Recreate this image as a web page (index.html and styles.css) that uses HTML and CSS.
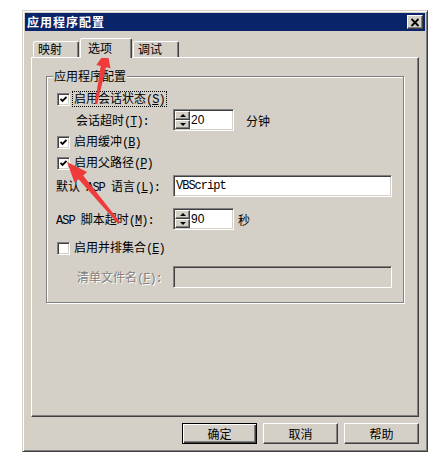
FILE: index.html
```html
<!DOCTYPE html>
<html>
<head>
    <meta charset="utf-8">
    <title>应用程序配置</title>
    <link rel="stylesheet" href="styles.css">
</head>
<body>
    <div class="window">
        <div class="titlebar">
            <span class="title">应用程序配置</span>
            <span class="close">
                <svg width="10" height="9" viewBox="0 0 10 9"><path d="M1.5 1 L8.5 8 M8.5 1 L1.5 8" stroke="#000" stroke-width="1.8" fill="none"/></svg>
            </span>
        </div>

        <div class="tabs">
            <div class="tab">映射</div>
            <div class="tab active">选项</div>
            <div class="tab">调试</div>
        </div>

        <div class="panel">
            <div class="group">
                <div class="legend">应用程序配置</div>

                <div class="row row-check r1">
                    <span class="check"><svg width="7" height="7" viewBox="0 0 7 7"><path d="M0.5 3 L2.5 5 L6.5 1" stroke="#000" stroke-width="1.8" fill="none"/></svg></span>
                    <span class="check-label focus">启用会话状态<span class="latin">(<u>S</u>)</span></span>
                </div>

                <div class="row row-field r2">
                    <span class="field-label indent">会话超时<span class="latin">(<u>T</u>):</span></span>
                    <div class="spin">
                        <div class="spin-buttons">
                            <span class="spin-btn"><i class="arrow-up"></i></span>
                            <span class="spin-btn"><i class="arrow-down"></i></span>
                        </div>
                        <span class="spin-value">20</span>
                    </div>
                    <span class="unit unit-wide">分钟</span>
                </div>

                <div class="row row-check r3">
                    <span class="check"><svg width="7" height="7" viewBox="0 0 7 7"><path d="M0.5 3 L2.5 5 L6.5 1" stroke="#000" stroke-width="1.8" fill="none"/></svg></span>
                    <span class="check-label">启用缓冲<span class="latin">(<u>B</u>)</span></span>
                </div>

                <div class="row row-check r4">
                    <span class="check"><svg width="7" height="7" viewBox="0 0 7 7"><path d="M0.5 3 L2.5 5 L6.5 1" stroke="#000" stroke-width="1.8" fill="none"/></svg></span>
                    <span class="check-label">启用父路径<span class="latin">(<u>P</u>)</span></span>
                </div>

                <div class="row row-field r5">
                    <span class="field-label flush">默认<span class="latin"> ASP </span>语言<span class="latin">(<u>L</u>):</span></span>
                    <div class="field">VBScript</div>
                </div>

                <div class="row row-field r6">
                    <span class="field-label flush"><span class="latin">ASP </span>脚本超时<span class="latin">(<u>M</u>):</span></span>
                    <div class="spin">
                        <div class="spin-buttons">
                            <span class="spin-btn"><i class="arrow-up"></i></span>
                            <span class="spin-btn"><i class="arrow-down"></i></span>
                        </div>
                        <span class="spin-value">90</span>
                    </div>
                    <span class="unit">秒</span>
                </div>

                <div class="row row-check r7">
                    <span class="check"></span>
                    <span class="check-label">启用并排集合<span class="latin">(<u>E</u>)</span></span>
                </div>

                <div class="row row-field r8">
                    <span class="field-label indent-more disabled">清单文件名<span class="latin">(<u>F</u>):</span></span>
                    <div class="field field-disabled"></div>
                </div>
            </div>
        </div>

        <div class="buttons">
            <div class="btn btn-default">确定</div>
            <div class="btn">取消</div>
            <div class="btn">帮助</div>
        </div>
    </div>

    <!-- annotation arrows drawn over the dialog -->
    <svg class="arrows" width="443" height="465" viewBox="0 0 443 465">
        <polygon points="107,50 110.5,68.3 106,67.2 97.2,104.2 94.8,103.8 100.7,66 96.3,65" fill="#ef3b39"/>
        <polygon points="67,162 87.2,172 83.2,175.6 120.2,222.2 118,223.8 78.6,179.3 74.5,182.6" fill="#ef3b39"/>
    </svg>
</body>
</html>
```

FILE: styles.css
```css
body {
    margin: 0;
    background-color: #ffffff;
    font-family: "Noto Sans CJK SC", "Liberation Sans", sans-serif;
    font-size: 12px;
    color: #000000;
}

.window {
    box-sizing: border-box;
    width: 406px;
    height: 442px;
    margin: 10px 0 0 22px;
    padding: 2px;
    background-color: #d4d0c8;
    border: 1px solid;
    border-color: #d4d0c8 #404040 #404040 #d4d0c8;
    box-shadow: inset 1px 1px 0 #ffffff, inset -1px -1px 0 #808080;
}

.titlebar {
    display: flex;
    align-items: center;
    justify-content: space-between;
    height: 18px;
    padding: 0 2px;
    background-color: #0a246a;
}

.title {
    color: #ffffff;
    font-weight: bold;
    letter-spacing: 1px;
    line-height: 18px;
}

.close {
    box-sizing: border-box;
    display: flex;
    align-items: center;
    justify-content: center;
    width: 16px;
    height: 14px;
    background-color: #d4d0c8;
    border: 1px solid;
    border-color: #ffffff #404040 #404040 #ffffff;
    box-shadow: inset -1px -1px 0 #808080;
}

/* tabs */
.tabs {
    display: flex;
    align-items: flex-end;
    height: 19px;
    margin: 7px 0 0 8px;
}

.tab {
    box-sizing: border-box;
    width: 46px;
    height: 16px;
    padding-left: 4px;
    line-height: 14px;
    background-color: #d4d0c8;
    border: 1px solid;
    border-bottom: none;
    border-color: #ffffff #404040 transparent #ffffff;
    border-radius: 2px 2px 0 0;
    box-shadow: inset -1px 0 0 #808080;
}

.tab.active {
    position: relative;
    z-index: 1;
    width: 52px;
    height: 20px;
    margin: 0 1px -1px 1px;
    padding-left: 7px;
    line-height: 17px;
}

.panel {
    box-sizing: border-box;
    width: 388px;
    height: 360px;
    margin-left: 6px;
    padding: 18px 0 0 14px;
    border: 1px solid;
    border-color: #ffffff #404040 #404040 #ffffff;
    box-shadow: inset -1px -1px 0 #808080;
}

/* group box */
.group {
    box-sizing: border-box;
    width: 358px;
    height: 227px;
    padding: 0 10px;
    border: 1px solid #808080;
    box-shadow: inset 1px 1px 0 #ffffff, 1px 1px 0 #ffffff;
}

.legend {
    width: max-content;
    margin: -8px 0 0 -4px;
    padding: 0 1px;
    line-height: 14px;
    background-color: #d4d0c8;
}

.row {
    display: flex;
    align-items: center;
}

.row-check {
    height: 16px;
}

.row-field {
    height: 22px;
}

.r1 { margin-top: 8px; }
.r2 { margin-top: 2px; }
.r3 { margin-top: 3px; }
.r4 { margin-top: 5px; }
.r5 { margin-top: 4px; }
.r6 { margin-top: 11px; }
.r7 { margin-top: 10px; }
.r8 { margin-top: 10px; }

/* half-width latin, like the dialog font */
.latin {
    font-family: "Liberation Mono", monospace;
    font-size: 12px;
    letter-spacing: -1px;
    white-space: pre;
}

.check {
    box-sizing: border-box;
    display: flex;
    align-items: center;
    justify-content: center;
    flex: none;
    width: 13px;
    height: 13px;
    background-color: #ffffff;
    border: 1px solid;
    border-color: #808080 #ffffff #ffffff #808080;
    box-shadow: inset 1px 1px 0 #404040, inset -1px -1px 0 #d4d0c8;
}

.check-label {
    margin-left: 4px;
    line-height: 14px;
}

.check-label.focus {
    margin-left: 2px;
    padding: 0 1px;
    line-height: 12px;
    border: 1px dotted #000000;
}

.field-label {
    box-sizing: border-box;
    flex: none;
    width: 116px;
    white-space: nowrap;
}

.field-label.indent {
    padding-left: 19px;
}

.field-label.indent-more {
    padding-left: 20px;
}

.field-label.flush {
    width: 117px;
    margin-left: -1px;
}

.field-label.disabled {
    color: #808080;
    text-shadow: 1px 1px 0 #ffffff;
}

/* spinner */
.spin {
    box-sizing: border-box;
    display: flex;
    align-items: center;
    flex: none;
    width: 61px;
    height: 22px;
    padding: 1px;
    background-color: #ffffff;
    border: 1px solid;
    border-color: #808080 #ffffff #ffffff #808080;
    box-shadow: inset 1px 1px 0 #404040, inset -1px -1px 0 #d4d0c8;
}

.spin-buttons {
    display: flex;
    flex-direction: column;
    width: 15px;
    height: 18px;
}

.spin-btn {
    box-sizing: border-box;
    display: flex;
    align-items: center;
    justify-content: center;
    height: 9px;
    background-color: #d4d0c8;
    border: 1px solid;
    border-color: #ffffff #404040 #404040 #ffffff;
    box-shadow: inset -1px -1px 0 #808080;
}

.arrow-up,
.arrow-down {
    width: 0;
    height: 0;
    border-left: 3px solid transparent;
    border-right: 3px solid transparent;
}

.arrow-up {
    border-bottom: 3px solid #000000;
}

.arrow-down {
    border-top: 3px solid #000000;
}

.spin-value {
    padding-left: 1px;
    font-family: "Liberation Sans", sans-serif;
    font-size: 12px;
}

.unit {
    margin-left: 4px;
}

.unit-wide {
    margin-left: 12px;
}

.field {
    box-sizing: border-box;
    width: 219px;
    height: 22px;
    padding: 0 2px;
    background-color: #ffffff;
    border: 1px solid;
    border-color: #808080 #ffffff #ffffff #808080;
    box-shadow: inset 1px 1px 0 #404040, inset -1px -1px 0 #d4d0c8;
    font-family: "Liberation Mono", monospace;
    font-size: 12px;
    letter-spacing: -1px;
    line-height: 20px;
}

.field-disabled {
    background-color: #d4d0c8;
}

/* bottom buttons */
.buttons {
    display: flex;
    justify-content: flex-end;
    gap: 6px;
    margin: 6px 6px 0 0;
}

.btn {
    box-sizing: border-box;
    width: 75px;
    height: 21px;
    line-height: 19px;
    text-align: center;
    border: 1px solid;
    border-color: #ffffff #404040 #404040 #ffffff;
    box-shadow: inset -1px -1px 0 #808080;
}

.btn-default {
    border-color: #000000;
    box-shadow: inset 1px 1px 0 #ffffff, inset -1px -1px 0 #404040, inset -2px -2px 0 #808080;
}

.arrows {
    position: absolute;
    left: 0;
    top: 0;
    pointer-events: none;
}
```
